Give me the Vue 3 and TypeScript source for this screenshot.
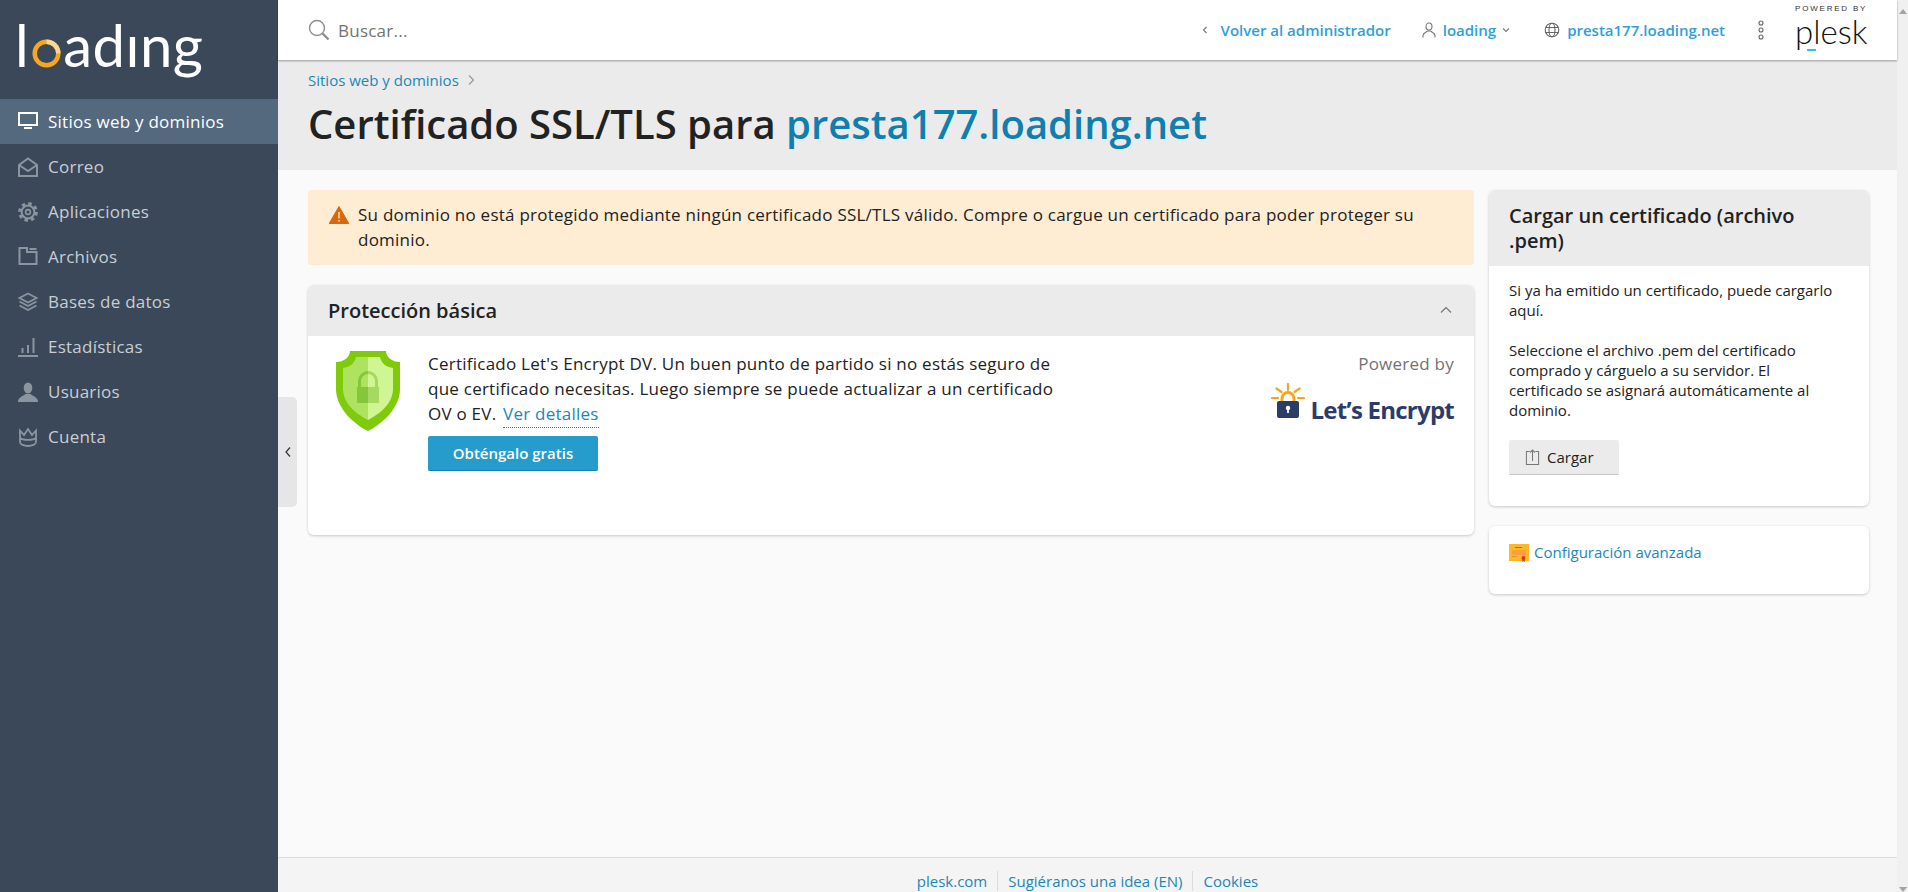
<script setup lang="ts">
interface NavItem { label: string; key: string; active?: boolean }
const nav: NavItem[] = [
  { label: 'Sitios web y dominios', key: 'monitor', active: true },
  { label: 'Correo', key: 'mail' },
  { label: 'Aplicaciones', key: 'gear' },
  { label: 'Archivos', key: 'folder' },
  { label: 'Bases de datos', key: 'layers' },
  { label: 'Estadísticas', key: 'stats' },
  { label: 'Usuarios', key: 'user' },
  { label: 'Cuenta', key: 'crown' }
]
</script>

<template>
  <div class="app">
    <aside class="sidebar">
      <div class="logo"><span>l</span><svg class="logo-o" viewBox="0 0 30 30"><circle cx="15" cy="15" r="12.2" fill="none" stroke="#f5a623" stroke-width="4.6" /><path d="M15 2.8a12.2 12.2 0 0 1 12.2 12.2" fill="none" stroke="#fbd69a" stroke-width="4.6" /></svg><span>adıng</span></div>
      <nav class="nav">
        <a v-for="item in nav" :key="item.key" class="nav-item" :class="{ active: item.active }">
          <svg class="nav-icon" viewBox="0 0 20 20" fill="none" stroke="currentColor" stroke-width="2">
            <template v-if="item.key === 'monitor'">
              <rect x="1" y="1" width="18" height="12" />
              <path d="M6 16h8" />
            </template>
            <path v-else-if="item.key === 'mail'" d="M1 8 10 1.5 19 8v11H1Zm0 0 9 6 9-6" />
            <template v-else-if="item.key === 'gear'">
              <circle cx="10" cy="10" r="6.4" />
              <circle cx="10" cy="10" r="2.4" stroke-width="1.6" />
              <circle cx="10" cy="10" r="8.4" stroke-width="3" stroke-dasharray="3.4 3.2" />
            </template>
            <path v-else-if="item.key === 'folder'" d="M1.5 1v16h17V5H9V1Zm10 1h7" />
            <path v-else-if="item.key === 'layers'" stroke-width="1.7" d="M10 1.5 18.5 6 10 10.5 1.5 6Zm-8.5 8L10 14l8.500-4.500M1.500 13.500 10 18l8.500-4.500" />
            <path v-else-if="item.key === 'stats'" d="M0 19h20M4.500 16v-5M10 16V8M15.500 16V1" />
            <template v-else-if="item.key === 'user'">
              <ellipse cx="10" cy="6" rx="4.300" ry="5.500" fill="currentColor" stroke="none" />
              <path d="M0 20c0-5 5-5.500 7.500-8h5c2.500 2.500 7.500 3 7.500 8Z" fill="currentColor" stroke="none" />
            </template>
            <path v-else stroke-width="1.800" d="M2 3.500 6 8l4-6 4 6 4-4.500V15c0 2.500-4 4-8 4s-8-1.500-8-4ZM2 11c3 2.500 13 2.500 16 0" />
          </svg>
          <span>{{ item.label }}</span>
        </a>
      </nav>
    </aside>

    <div class="handle">
      <svg viewBox="0 0 8 12" class="handle-icon" fill="none" stroke="#333" stroke-width="1.200"><path d="M6 1.500 2 6l4 4.500" /></svg>
    </div>

    <div class="main">
      <header class="topbar">
        <div class="search">
          <svg viewBox="0 0 22 22" class="search-icon" fill="none" stroke="#8f8f8f"><circle cx="9" cy="9" r="7.500" stroke-width="1.400" /><path d="m14.500 14.500 6 6" stroke-width="2.400" /></svg>
          <span>Buscar...</span>
        </div>
        <div class="top-links">
          <svg class="tiny" viewBox="0 0 8 10" fill="none" stroke="#777" stroke-width="1.100"><path d="M5.500 2 2.500 5l3 3" /></svg>
          <a class="top-link back">Volver al administrador</a>
          <svg class="top-icon user-i" viewBox="0 0 16 16" fill="none" stroke="#777" stroke-width="1.100"><ellipse cx="8" cy="4.500" rx="3" ry="3.500" /><path d="M2 15.500v-2c0-2.500 3-3 4.500-4.500h3c1.500 1.500 4.500 2 4.500 4.500v2" /></svg>
          <a class="top-link">loading</a>
          <svg class="tiny caret" viewBox="0 0 10 8" fill="none" stroke="#777" stroke-width="1.100"><path d="m2 2.500 3 3 3-3" /></svg>
          <svg class="top-icon globe" viewBox="0 0 16 16" fill="none" stroke="#666" stroke-width="1.100"><circle cx="8" cy="8" r="6.800" /><ellipse cx="8" cy="8" rx="3" ry="6.800" /><path d="M1.500 5.500h13M1.500 10.500h13" /></svg>
          <a class="top-link">presta177.loading.net</a>
          <svg class="dots" viewBox="0 0 8 20" fill="none" stroke="#666" stroke-width="1.100"><circle cx="4" cy="3" r="2" /><circle cx="4" cy="10" r="2" /><circle cx="4" cy="17" r="2" /></svg>
          <div class="plesk">
            <span class="plesk-pow">POWERED BY</span>
            <span class="plesk-name">plesk</span>
            <i class="plesk-bar"></i>
          </div>
        </div>
      </header>

      <section class="heading">
        <div class="crumbs">
          <a>Sitios web y dominios</a>
          <svg viewBox="0 0 8 12" class="crumb-sep" fill="none" stroke="#999" stroke-width="1.200"><path d="m2 1.500 4.500 4.500L2 10.500" /></svg>
        </div>
        <h1>Certificado SSL/TLS para <a>presta177.loading.net</a></h1>
      </section>

      <div class="content">
        <div class="col-main">
          <div class="alert">
            <svg class="alert-icon" viewBox="0 0 20 18"><path d="M10 .5 19.800 17.500H.2Z" fill="#d9670b" stroke="#d9670b" stroke-linejoin="round" /><path d="M10 6v6.500M10 14v1.500" stroke="#fdebd3" stroke-width="1.300" /></svg>
            <p>Su dominio no está protegido mediante ningún certificado SSL/TLS válido. Compre o cargue un certificado para poder proteger su dominio.</p>
          </div>

          <div class="card protect">
            <div class="card-head">
              <h2>Protección básica</h2>
              <svg class="collapse" viewBox="0 0 12 8" fill="none" stroke="#777" stroke-width="1.200"><path d="m1 6.500 5-5 5 5" /></svg>
            </div>
            <div class="protect-body">
              <svg class="shield" viewBox="0 0 64 80">
                <path d="M14 0h36c0 6 6 11 14 11v27c0 18-16 34-32 42C16 72 0 56 0 38V11c8 0 14-5 14-11Z" fill="#7fcb0b" />
                <path d="M20 6h12v63C20 63 7 52 7 38V17c7-1 12-5 13-11Z" fill="#aee361" />
                <path d="M44 6H32v63c12-6 25-17 25-31V17c-7-1-12-5-13-11Z" fill="#d0f693" />
                <path d="M21 52V36h11v16Z" fill="#85c63a" />
                <path d="M32 36h11v16H32Z" fill="#a5d95f" />
                <path d="M23.500 36v-6a8.500 8.500 0 0 1 8.500-8.500" fill="none" stroke="#85c63a" stroke-width="3" />
                <path d="M40.500 36v-6a8.500 8.500 0 0 0-8.500-8.500" fill="none" stroke="#a5d95f" stroke-width="3" />
              </svg>
              <div class="protect-text">
                <p>Certificado Let's Encrypt DV. Un buen punto de partido si no estás seguro de<br />que certificado necesitas. Luego siempre se puede actualizar a un certificado<br />OV o EV. <a class="details">Ver detalles</a></p>
                <button class="btn-primary">Obténgalo gratis</button>
              </div>
              <div class="powered">
                <span class="powered-by">Powered by</span>
                <div class="le">
                  <svg class="le-icon" viewBox="0 0 34 36">
                    <g stroke="#f9a51a" stroke-width="2.200" fill="none" stroke-linecap="round">
                      <path d="M17 1v6M5.500 5.500l5 3.500M28.500 5.500l-5 3.500M1 15h6M27 15h6" />
                      <path d="M11 20v-4.500a6 6 0 0 1 12 0V20" stroke-width="3" stroke-linecap="butt" />
                    </g>
                    <rect x="6" y="18" width="22" height="17" rx="2" fill="#2c3c69" />
                    <circle cx="17" cy="25" r="2.200" fill="#fff" />
                    <path d="M17 25v5" stroke="#fff" stroke-width="1.800" />
                  </svg>
                  <span class="le-text">Let’s Encrypt</span>
                </div>
              </div>
            </div>
          </div>
        </div>

        <div class="col-side">
          <div class="card">
            <div class="card-head side-head"><h2>Cargar un certificado (archivo .pem)</h2></div>
            <div class="side-body">
              <p>Si ya ha emitido un certificado, puede cargarlo aquí.</p>
              <p>Seleccione el archivo .pem del certificado comprado y cárguelo a su servidor. El<br />certificado se asignará automáticamente al dominio.</p>
              <button class="btn-default">
                <svg viewBox="0 0 16 16" class="upload" preserveAspectRatio="none" fill="none" stroke="#777" stroke-width="1.100"><path d="M5 2.500H1.500v13h13v-13H11M8 12V1M5.500 3.500 8 1l2.500 2.500" /></svg>
                Cargar
              </button>
            </div>
          </div>
          <div class="card adv">
            <svg class="cert" viewBox="0 0 20 18">
              <rect width="20" height="17" fill="#fdb827" />
              <rect x="3" y="6" width="14" height="5" fill="#fb9e3c" />
              <path d="M6 3.500h7" stroke="#8a6a1f" stroke-width=".8" />
              <path d="M3 12.500h5" stroke="#d98b2a" stroke-width=".8" />
              <circle cx="14.500" cy="14" r="2" fill="#d9382c" />
              <path d="M13.300 15v3l1.200-.8 1.200.8v-3Z" fill="#d9382c" />
            </svg>
            <a>Configuración avanzada</a>
          </div>
        </div>
      </div>

      <footer class="footer">
        <a>plesk.com</a><a>Sugiéranos una idea (EN)</a><a>Cookies</a>
      </footer>
    </div>

    <div class="scrollbar"><i class="arrow up"></i><i class="arrow down"></i></div>
  </div>
</template>

<style>
html, body { margin: 0; height: 100%; overflow: hidden; }
</style>

<style scoped>
.app { display: flex; height: 892px; overflow: hidden; font-family: "Open Sans", "Noto Sans", sans-serif; color: #222; font-size: 17px; letter-spacing: .24px; background: #fafafa; position: relative; }
a { color: #1b87b8; text-decoration: none; }
p, h1, h2 { margin: 0; }

.sidebar { width: 278px; flex: none; background: #3a4859; color: #fff; }
.logo { height: 99px; display: flex; align-items: flex-start; padding: 14px 0 0 15px; box-sizing: border-box; font-family: "Lato", sans-serif; font-weight: 400; font-size: 58px; line-height: 62px; letter-spacing: .5px; }
.logo-o { width: 29px; height: 29px; margin: 25px 2px 0 3px; }
.nav { display: flex; flex-direction: column; }
.nav-item { height: 45px; display: flex; align-items: center; gap: 10px; padding-left: 18px; color: #c9ced4; font-size: 17px; letter-spacing: .25px; }
.nav-item .nav-icon { color: #8b95a0; }
.nav-item.active { background: #54697e; color: #fff; }
.nav-item.active .nav-icon { color: #fff; }
.nav-icon { width: 20px; height: 20px; flex: none; }

.handle { position: absolute; left: 278px; top: 397px; width: 19px; height: 110px; background: #e6e6e6; border-radius: 0 5px 5px 0; display: flex; align-items: center; justify-content: center; z-index: 2; }
.handle-icon { width: 8px; height: 12px; }

.main { flex: 1; min-width: 0; display: flex; flex-direction: column; height: 892px; }

.topbar { height: 60px; flex: none; background: #fff; box-shadow: 0 1px 2px rgba(0,0,0,.35); display: flex; align-items: center; justify-content: space-between; position: relative; z-index: 1; box-sizing: border-box; padding-right: 29px; }
.search { display: flex; align-items: center; gap: 8px; padding-left: 30px; color: #737373; }
.search-icon { width: 22px; height: 22px; }
.top-links { display: flex; align-items: center; }
.top-link { font-size: 15px; font-weight: 600; color: #2d9fdb; white-space: nowrap; letter-spacing: 0; }
.tiny { width: 8px; height: 10px; margin-right: 12px; }
.back { margin-right: 30px; }
.top-icon { width: 16px; height: 16px; margin-right: 6px; }
.caret { width: 10px; height: 8px; margin: 0 0 0 5px; }
.globe { margin: 0 7px 0 33px; }
.dots { width: 8px; height: 20px; margin: 0 30px 0 32px; }
.plesk { display: flex; flex-direction: column; align-items: flex-start; position: relative; width: 73px; height: 50px; margin-top: -4px; }
.plesk-pow { font-size: 8px; letter-spacing: 1.800px; line-height: 10px; margin-top: 1px; color: #333; white-space: nowrap; font-family: "Liberation Sans", sans-serif; }
.plesk-name { font-family: "Lato", sans-serif; font-weight: 300; font-size: 33px; line-height: 33px; color: #111; letter-spacing: 0; margin-top: 1px; }
.plesk-bar { position: absolute; left: 12px; top: 46px; width: 9px; height: 2px; background: #29c5e6; }

.heading { height: 110px; flex: none; background: #ebebeb; box-sizing: border-box; padding: 10px 30px 0; letter-spacing: 0; }
.crumbs { display: flex; align-items: center; gap: 8px; font-size: 15px; line-height: 20px; }
.crumb-sep { width: 8px; height: 12px; }
.heading h1 { font-size: 40px; font-weight: 600; line-height: 54px; margin-top: 7px; color: #222; white-space: nowrap; }
.heading h1 a { color: #0e7fae; }

.content { flex: 1; min-height: 0; display: flex; gap: 15px; padding: 20px 28px 0 30px; }
.col-main { flex: 1; min-width: 0; display: flex; flex-direction: column; gap: 20px; }
.col-side { width: 380px; flex: none; display: flex; flex-direction: column; gap: 20px; }

.alert { height: 75px; box-sizing: border-box; background: #feecd3; border-radius: 3px; display: flex; gap: 9px; padding: 12px 20px; line-height: 25px; }
.alert-icon { width: 20px; height: 18px; flex: none; margin-top: 4px; margin-left: 1px; }

.card { background: #fff; border-radius: 6px; box-shadow: 0 1px 3px rgba(0,0,0,.2); overflow: hidden; }
.card-head { background: #ebebeb; display: flex; align-items: center; justify-content: space-between; padding: 0 20px; letter-spacing: 0; }
.card-head h2 { font-size: 20px; font-weight: 600; line-height: 25px; }
.protect { height: 250px; }
.protect .card-head { height: 51px; }
.collapse { width: 12px; height: 8px; margin-right: 2px; margin-top: -2px; }
.protect-body { display: flex; padding: 15px 20px 0 28px; }
.shield { width: 64px; height: 80px; flex: none; }
.protect-text { margin-left: 28px; line-height: 25px; white-space: nowrap; }
.details { border-bottom: 1px dotted #0e7fae; margin-left: 2px; padding-bottom: 2px; }
.btn-primary { display: block; margin-top: 10px; width: 170px; height: 35px; background: #259ccb; border: 0; border-bottom: 1px solid #1a7ea6; border-radius: 2px; color: #fff; font: 600 15px "Open Sans", sans-serif; padding: 0; }
.powered { margin-left: auto; display: flex; flex-direction: column; align-items: flex-end; }
.powered-by { color: #737373; line-height: 22px; margin-top: 2px; }
.le { display: flex; align-items: flex-end; margin-top: 8px; }
.le-icon { width: 34px; height: 36px; }
.le-text { font-weight: 700; font-size: 24px; line-height: 30px; color: #2c3c69; letter-spacing: -.75px; margin-left: 6px; margin-bottom: -6px; }

.side-head { height: 76px; }
.side-body { padding: 14px 20px 0; font-size: 15px; line-height: 20px; height: 240px; box-sizing: border-box; letter-spacing: 0; }
.side-body p + p { margin-top: 20px; }
.btn-default { margin-top: 20px; width: 110px; height: 35px; background: #ebebeb; border: 0; border-bottom: 1px solid #c4c4c4; border-radius: 2px; display: flex; align-items: center; padding: 0 0 0 16px; gap: 7px; font: 500 15px "Open Sans", sans-serif; color: #222; }
.upload { width: 15px; height: 16px; }
.adv { height: 68px; box-sizing: border-box; padding: 18px 20px 0; font-size: 15px; line-height: 20px; display: flex; align-items: flex-start; gap: 5px; letter-spacing: 0; }
.adv a { margin-top: -2px; }
.cert { width: 20px; height: 18px; flex: none; }

.footer { height: 35px; flex: none; background: #f4f4f4; border-top: 1px solid #dedede; box-sizing: border-box; display: flex; justify-content: center; align-items: flex-start; padding-top: 13px; font-size: 15px; line-height: 20px; overflow: hidden; letter-spacing: 0; }
.footer a { padding: 0 10px; line-height: 20px; }
.footer a + a { border-left: 1px solid #ddd; }

.scrollbar { width: 11px; flex: none; background: #f0f0f0; position: relative; }
.arrow { position: absolute; left: 2px; width: 0; height: 0; border-left: 4px solid transparent; border-right: 4px solid transparent; }
.arrow.up { top: 9px; border-bottom: 5px solid #a3a3a3; }
.arrow.down { bottom: 0; border-top: 5px solid #a3a3a3; }
</style>
